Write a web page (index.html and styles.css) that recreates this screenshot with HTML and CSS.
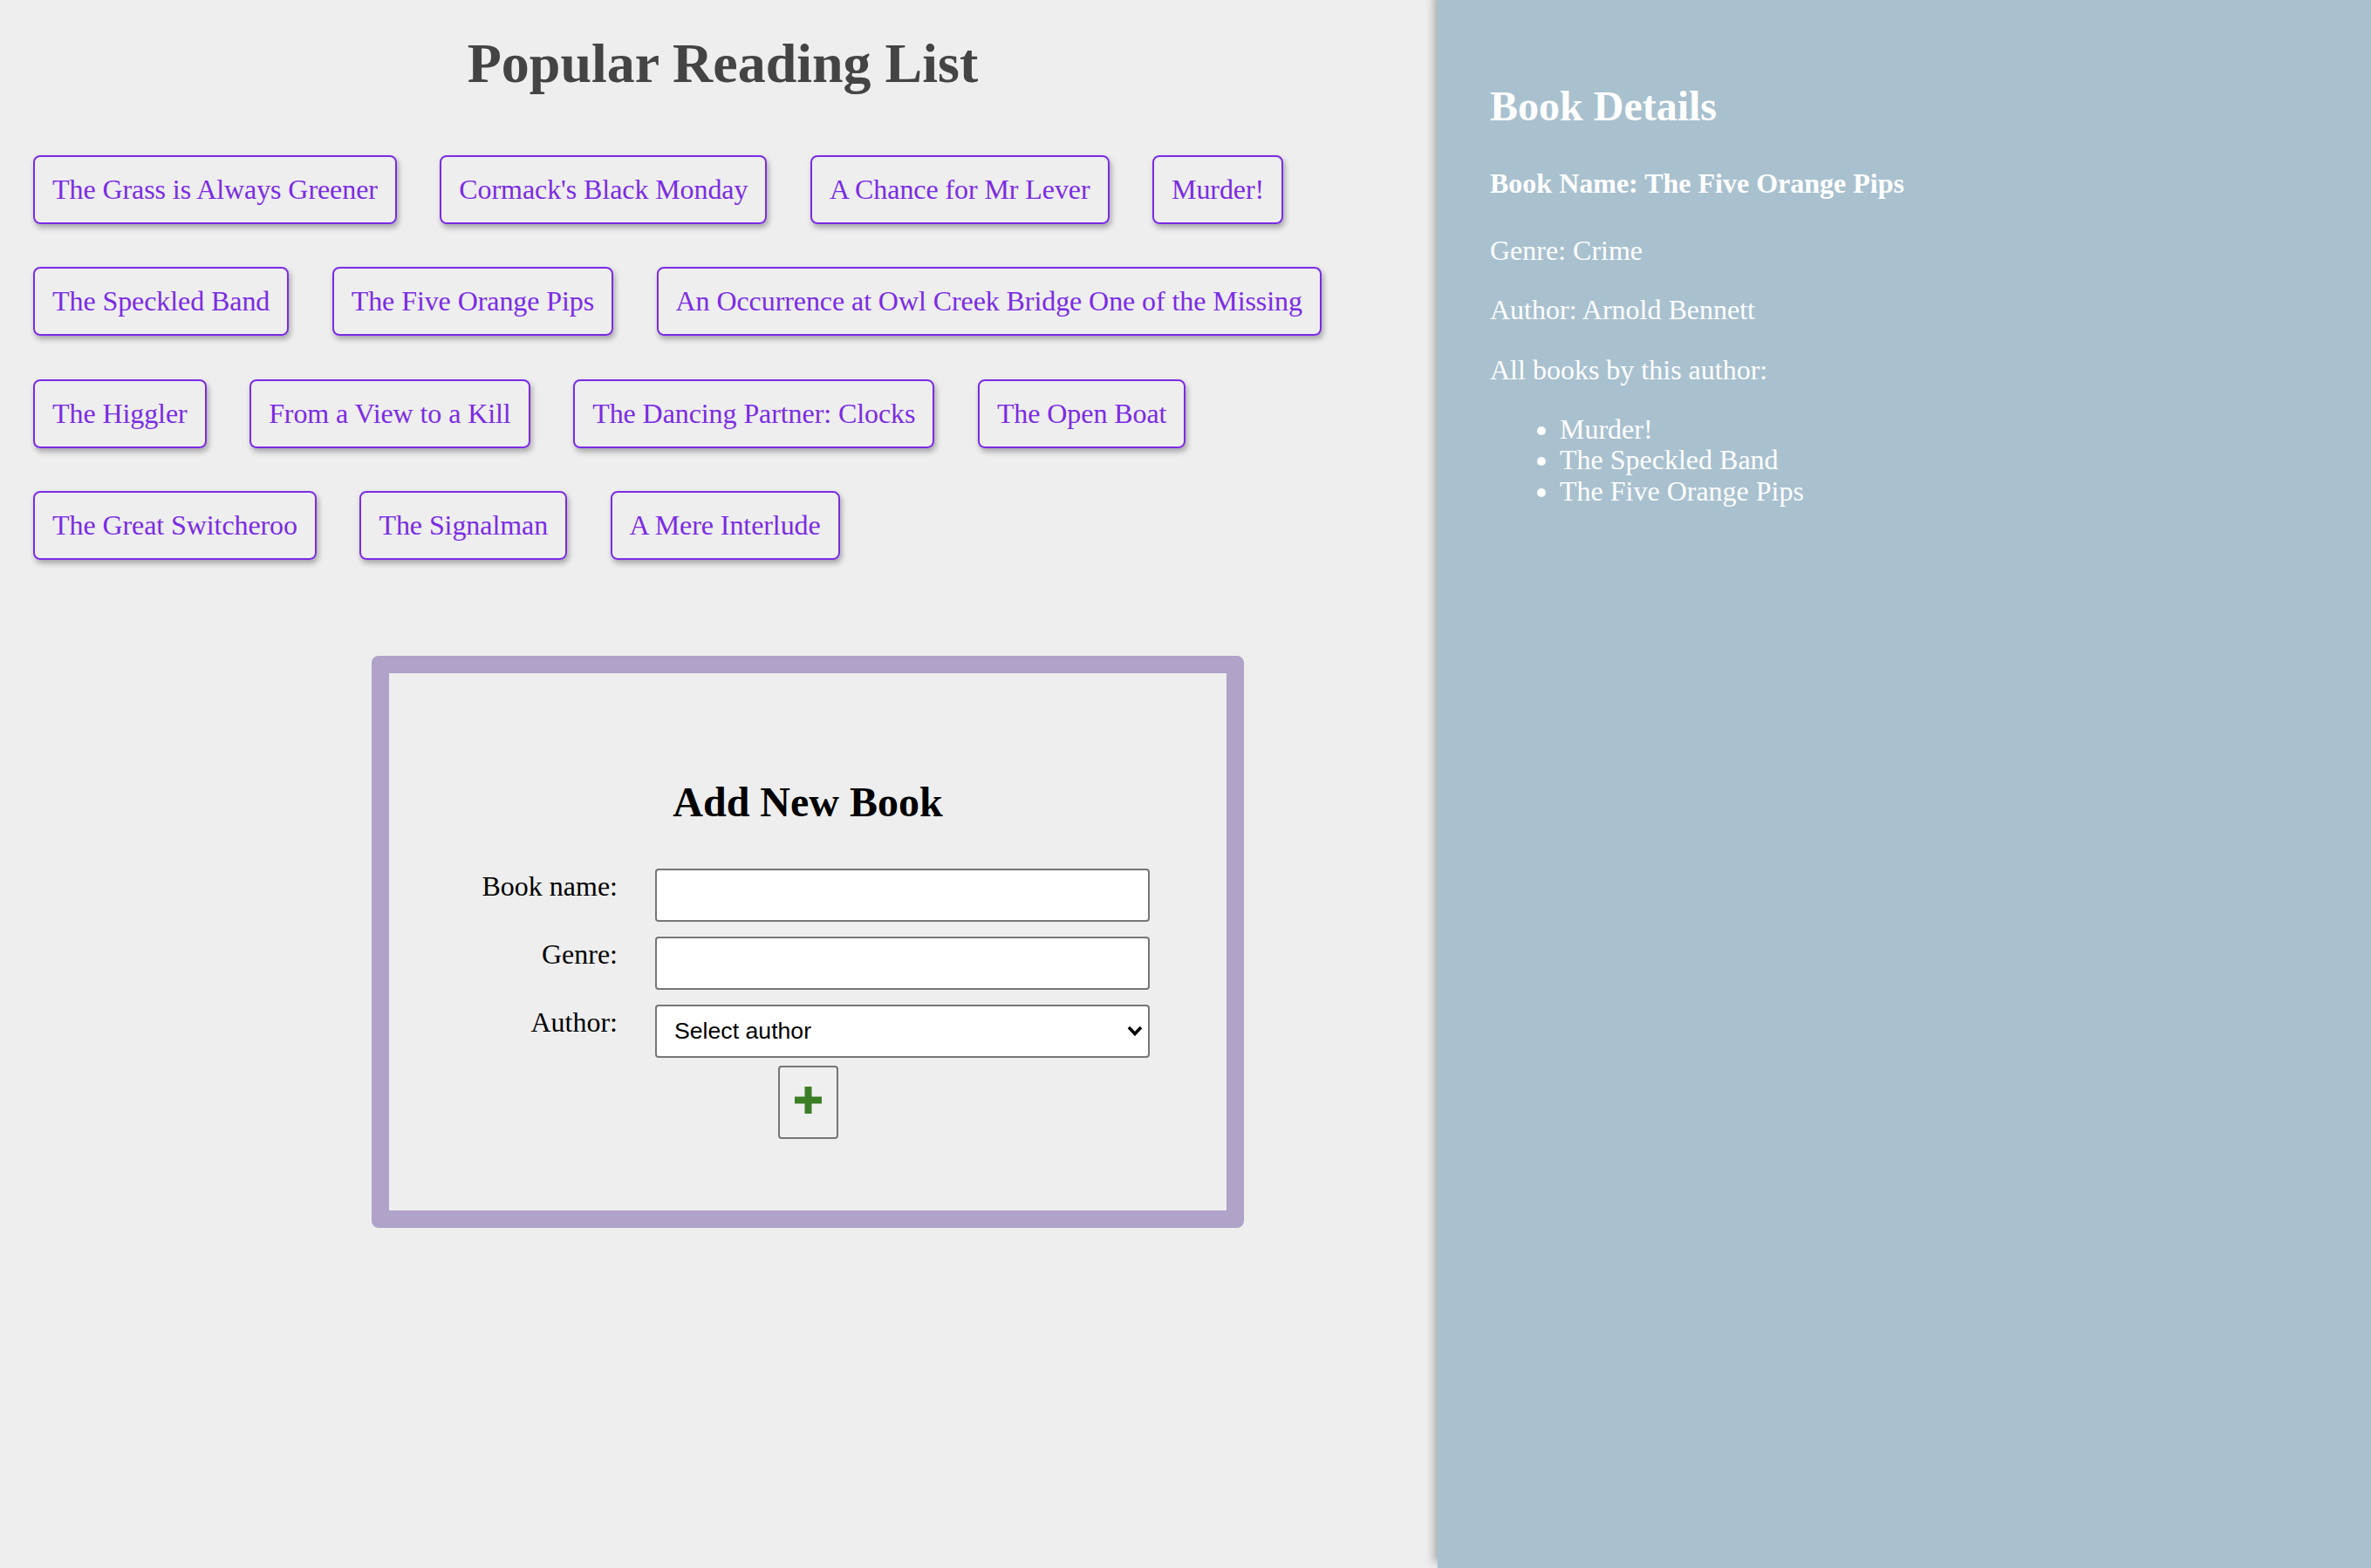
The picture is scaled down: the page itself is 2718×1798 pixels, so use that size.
FILE: index.html
```html
<!DOCTYPE html>
<html lang="en">
<head>
<meta charset="utf-8">
<title>Popular Reading List</title>
<link rel="stylesheet" href="styles.css">
</head>
<body>
<div class="page">
  <main class="main">
    <h1 class="title">Popular Reading List</h1>
    <ul class="book-list">
      <li class="book">The Grass is Always Greener</li>
      <li class="book">Cormack's Black Monday</li>
      <li class="book">A Chance for Mr Lever</li>
      <li class="book">Murder!</li>
      <li class="book">The Speckled Band</li>
      <li class="book">The Five Orange Pips</li>
      <li class="book">An Occurrence at Owl Creek Bridge One of the Missing</li>
      <li class="book">The Higgler</li>
      <li class="book">From a View to a Kill</li>
      <li class="book">The Dancing Partner: Clocks</li>
      <li class="book">The Open Boat</li>
      <li class="book">The Great Switcheroo</li>
      <li class="book">The Signalman</li>
      <li class="book">A Mere Interlude</li>
    </ul>
    <form class="add-book">
      <h2 class="form-title">Add New Book</h2>
      <div class="fields">
        <div class="field">
          <label class="field-label">Book name:</label>
          <input class="field-input" type="text">
        </div>
        <div class="field">
          <label class="field-label">Genre:</label>
          <input class="field-input" type="text">
        </div>
        <div class="field">
          <label class="field-label">Author:</label>
          <div class="select-wrap">
            <select class="field-input field-select">
              <option>Select author</option>
            </select>
            <svg class="chevron" width="18" height="12" viewBox="0 0 18 12"><polyline points="2,2 9,9.5 16,2" fill="none" stroke="#000" stroke-width="3.6" stroke-linecap="butt" stroke-linejoin="miter"/></svg>
          </div>
        </div>
      </div>
      <div class="actions">
        <button type="button" class="add-btn">
          <svg class="plus" width="31" height="31" viewBox="0 0 31 31"><rect x="0" y="11.5" width="31" height="8" fill="#3c7e27"/><rect x="11.5" y="0" width="8" height="31" fill="#3c7e27"/></svg>
        </button>
      </div>
    </form>
  </main>
  <aside class="details">
    <h2 class="details-title">Book Details</h2>
    <h4 class="details-name">Book Name: The Five Orange Pips</h4>
    <p class="details-line">Genre: Crime</p>
    <p class="details-line">Author: Arnold Bennett</p>
    <p class="details-line">All books by this author:</p>
    <ul class="details-list">
      <li>Murder!</li>
      <li>The Speckled Band</li>
      <li>The Five Orange Pips</li>
    </ul>
  </aside>
</div>
</body>
</html>
```
FILE: styles.css
```css
html, body {
  margin: 0;
  padding: 0;
}

body {
  background: #eeeeee;
  font-family: "Liberation Serif", "Times New Roman", serif;
  font-size: 32px;
  color: #000;
}

.page {
  display: flex;
  width: 2718px;
  height: 1798px;
  overflow: hidden;
}

.main {
  flex: 0 0 1648px;
  box-sizing: border-box;
  padding: 0 7px 0 16px;
}

.title {
  margin: 37px 0 0;
  font-size: 64px;
  line-height: 72px;
  font-weight: bold;
  color: #444;
  text-align: center;
}

.book-list {
  list-style: none;
  margin: 69px 0 0;
  padding: 0 0 0 22px;
  display: flex;
  flex-wrap: wrap;
  column-gap: 49.5px;
  row-gap: 49.3px;
}

.book {
  padding: 20px;
  border: 2px solid #7b2be4;
  border-radius: 8px;
  box-shadow: 2px 4px 6px rgba(0, 0, 0, 0.3);
  color: #7b2be4;
  line-height: 35px;
  letter-spacing: -0.08px;
  white-space: nowrap;
}

.add-book {
  box-sizing: border-box;
  width: 1000px;
  margin: 110px 0 0 410px;
  border: 20px solid #b0a2c9;
  border-radius: 8px;
  padding: 121px 0 82px;
}

.form-title {
  margin: 0 0 50px;
  font-size: 48px;
  line-height: 53px;
  font-weight: bold;
  text-align: center;
}

.fields {
  display: flex;
  flex-direction: column;
  gap: 17px;
}

.field {
  display: grid;
  grid-template-columns: 262px 567px;
  column-gap: 43px;
  align-items: start;
}

.field-label {
  text-align: right;
  padding-top: 2px;
  line-height: 36px;
  font-size: 32px;
}

.field-input {
  box-sizing: border-box;
  width: 567px;
  height: 61px;
  margin: 0;
  padding: 0 12px;
  border: 2px solid #767676;
  border-radius: 4px;
  background: #fff;
  font-family: "Liberation Sans", Arial, sans-serif;
  font-size: 26.67px;
  color: #000;
}

.select-wrap {
  position: relative;
  width: 567px;
  height: 61px;
}

.field-select {
  -webkit-appearance: none;
  appearance: none;
  padding-left: 20px;
}

.chevron {
  position: absolute;
  right: 8px;
  top: 24px;
  pointer-events: none;
}

.actions {
  display: flex;
  justify-content: center;
  margin-top: 9px;
}

.add-btn {
  box-sizing: border-box;
  width: 69px;
  height: 84px;
  padding: 0;
  border: 2px solid #767676;
  border-radius: 4px;
  background: #efefef;
  display: flex;
  align-items: center;
  justify-content: center;
}

.plus {
  display: block;
  margin-bottom: 4px;
}

.details {
  flex: 1 1 auto;
  box-sizing: border-box;
  padding: 60px;
  background: #a9c1cf;
  color: #fff;
  box-shadow: -4px -6px 10px rgba(0, 0, 0, 0.3);
  position: relative;
  z-index: 1;
}

.details-title {
  margin: 35px 0 0;
  font-size: 48px;
  line-height: 53px;
  font-weight: bold;
}

.details-name {
  margin: 44.5px 0 41px;
  font-size: 32px;
  line-height: 35px;
  font-weight: bold;
}

.details-line {
  margin: 32px 0;
  line-height: 36.5px;
}

.details-list {
  margin: 33px 0 0;
  padding-left: 80px;
  line-height: 35.3px;
}
```
